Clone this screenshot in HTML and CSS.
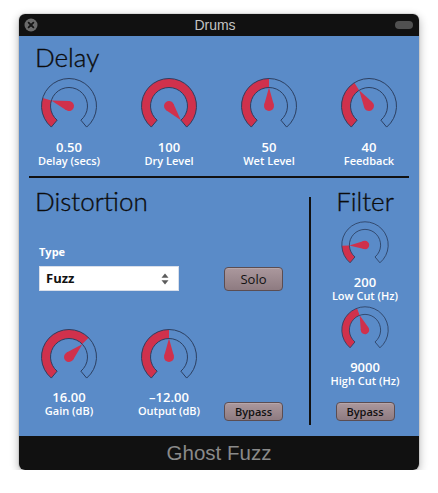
FILE: index.html
```html
<!DOCTYPE html>
<html>
<head>
<meta charset="utf-8">
<title>Drums</title>
<link rel="stylesheet" href="styles.css">
</head>
<body>
<div class="window">
  <div class="titlebar">
    <svg class="close" width="14" height="14" viewBox="0 0 14 14"><circle cx="7" cy="7" r="6.5" fill="#6a6a6a"/><path d="M4.6 4.6 L9.4 9.4 M9.4 4.6 L4.6 9.4" stroke="#151515" stroke-width="1.8" stroke-linecap="round"/></svg>
    <div class="title">Drums</div>
    <div class="pill"></div>
  </div>
  <div class="panel">
    <section class="delay">
      <h2 class="heading">Delay</h2>
      <div class="knob-row">
        <div class="knob">
          <svg width="64" height="64" viewBox="0 0 64 64"><circle class="fill" cx="32" cy="32" r="23" pathLength="360" stroke-dasharray="67 360" transform="rotate(130 32 32)"/><path class="ring" d="M14.32 53.07 A27.5 27.5 0 1 1 49.68 53.07 L43.89 46.17 A18.5 18.5 0 1 0 20.11 46.17 Z"/><g class="pointer" transform="rotate(-73 32 32)"><circle cx="32" cy="32" r="5"/><polygon points="27.19,30.65 32,13.5 36.81,30.65"/></g></svg>
          <div class="value">0.50</div>
          <div class="label">Delay (secs)</div>
        </div>
        <div class="knob">
          <svg width="64" height="64" viewBox="0 0 64 64"><circle class="fill" cx="32" cy="32" r="23" pathLength="360" stroke-dasharray="280 360" transform="rotate(130 32 32)"/><path class="ring" d="M14.32 53.07 A27.5 27.5 0 1 1 49.68 53.07 L43.89 46.17 A18.5 18.5 0 1 0 20.11 46.17 Z"/><g class="pointer" transform="rotate(140 32 32)"><circle cx="32" cy="32" r="5"/><polygon points="27.19,30.65 32,13.5 36.81,30.65"/></g></svg>
          <div class="value">100</div>
          <div class="label">Dry Level</div>
        </div>
        <div class="knob">
          <svg width="64" height="64" viewBox="0 0 64 64"><circle class="fill" cx="32" cy="32" r="23" pathLength="360" stroke-dasharray="140 360" transform="rotate(130 32 32)"/><path class="ring" d="M14.32 53.07 A27.5 27.5 0 1 1 49.68 53.07 L43.89 46.17 A18.5 18.5 0 1 0 20.11 46.17 Z"/><g class="pointer" transform="rotate(0 32 32)"><circle cx="32" cy="32" r="5"/><polygon points="27.19,30.65 32,13.5 36.81,30.65"/></g></svg>
          <div class="value">50</div>
          <div class="label">Wet Level</div>
        </div>
        <div class="knob">
          <svg width="64" height="64" viewBox="0 0 64 64"><circle class="fill" cx="32" cy="32" r="23" pathLength="360" stroke-dasharray="108 360" transform="rotate(130 32 32)"/><path class="ring" d="M14.32 53.07 A27.5 27.5 0 1 1 49.68 53.07 L43.89 46.17 A18.5 18.5 0 1 0 20.11 46.17 Z"/><g class="pointer" transform="rotate(-32 32 32)"><circle cx="32" cy="32" r="5"/><polygon points="27.19,30.65 32,13.5 36.81,30.65"/></g></svg>
          <div class="value">40</div>
          <div class="label">Feedback</div>
        </div>
      </div>
    </section>
    <div class="separator"></div>
    <div class="lower">
      <section class="distortion">
        <h2 class="heading">Distortion</h2>
        <div class="type-label">Type</div>
        <div class="select">
          <span>Fuzz</span>
          <svg width="8" height="12" viewBox="0 0 8 12"><polygon points="4,0.5 7.5,4.8 0.5,4.8" fill="#5c5c5c"/><polygon points="0.5,7.2 7.5,7.2 4,11.5" fill="#5c5c5c"/></svg>
        </div>
        <div class="btn solo">Solo</div>
        <div class="knob low">
          <svg width="64" height="64" viewBox="0 0 64 64"><circle class="fill" cx="32" cy="32" r="23" pathLength="360" stroke-dasharray="186 360" transform="rotate(130 32 32)"/><path class="ring" d="M14.32 53.07 A27.5 27.5 0 1 1 49.68 53.07 L43.89 46.17 A18.5 18.5 0 1 0 20.11 46.17 Z"/><g class="pointer" transform="rotate(46 32 32)"><circle cx="32" cy="32" r="5"/><polygon points="27.19,30.65 32,13.5 36.81,30.65"/></g></svg>
          <div class="value">16.00</div>
          <div class="label">Gain (dB)</div>
        </div>
        <div class="knob low">
          <svg width="64" height="64" viewBox="0 0 64 64"><circle class="fill" cx="32" cy="32" r="23" pathLength="360" stroke-dasharray="140 360" transform="rotate(130 32 32)"/><path class="ring" d="M14.32 53.07 A27.5 27.5 0 1 1 49.68 53.07 L43.89 46.17 A18.5 18.5 0 1 0 20.11 46.17 Z"/><g class="pointer" transform="rotate(0 32 32)"><circle cx="32" cy="32" r="5"/><polygon points="27.19,30.65 32,13.5 36.81,30.65"/></g></svg>
          <div class="value">–12.00</div>
          <div class="label">Output (dB)</div>
        </div>
        <div class="btn bypass dist-bypass">Bypass</div>
      </section>
      <div class="vline"></div>
      <section class="filter">
        <h2 class="heading">Filter</h2>
        <div class="knob small first">
          <svg width="54" height="54" viewBox="0 0 64 64"><circle class="fill" cx="32" cy="32" r="23" pathLength="360" stroke-dasharray="48 360" transform="rotate(130 32 32)"/><path class="ring" d="M14.32 53.07 A27.5 27.5 0 1 1 49.68 53.07 L43.89 46.17 A18.5 18.5 0 1 0 20.11 46.17 Z"/><g class="pointer" transform="rotate(-92 32 32)"><circle cx="32" cy="32" r="5"/><polygon points="27.19,30.65 32,13.5 36.81,30.65"/></g></svg>
          <div class="value">200</div>
          <div class="label">Low Cut (Hz)</div>
        </div>
        <div class="knob small second">
          <svg width="54" height="54" viewBox="0 0 64 64"><circle class="fill" cx="32" cy="32" r="23" pathLength="360" stroke-dasharray="120 360" transform="rotate(130 32 32)"/><path class="ring" d="M14.32 53.07 A27.5 27.5 0 1 1 49.68 53.07 L43.89 46.17 A18.5 18.5 0 1 0 20.11 46.17 Z"/><g class="pointer" transform="rotate(-20 32 32)"><circle cx="32" cy="32" r="5"/><polygon points="27.19,30.65 32,13.5 36.81,30.65"/></g></svg>
          <div class="value">9000</div>
          <div class="label">High Cut (Hz)</div>
        </div>
        <div class="btn bypass filter-bypass">Bypass</div>
      </section>
    </div>
  </div>
  <div class="footer">Ghost Fuzz</div>
</div>
</body>
</html>
```

FILE: styles.css
```css
* { box-sizing: border-box; }

body {
  margin: 0;
  padding: 14px 0 0 19px;
  background: #ffffff;
}

.window {
  width: 400px;
  border-radius: 6px;
  overflow: hidden;
  box-shadow: 0 3px 10px rgba(0, 0, 0, 0.32), 0 0 0 1px rgba(0, 0, 0, 0.08);
}

.titlebar {
  height: 22px;
  background: #111111;
  display: grid;
  grid-template-columns: 1fr auto 1fr;
  align-items: center;
  padding: 0 6px 0 5px;
}

.close { display: block; }

.title {
  font: 400 14px/22px "Liberation Sans", Arial, sans-serif;
  color: #c4c4c4;
  margin-right: 7px;
}

.pill {
  justify-self: end;
  width: 18px;
  height: 8px;
  border-radius: 4px;
  background: #505050;
}

.panel {
  background: #5a8bc8;
  height: 400px;
  display: flex;
  flex-direction: column;
}

.heading {
  margin: 0;
  font-family: Lato, "Noto Sans", sans-serif;
  font-weight: 300;
  font-size: 26px;
  line-height: 26px;
  color: #0c0c0c;
  -webkit-text-stroke: 0.35px #0c0c0c;
}

.delay .heading { margin: 8px 0 0 16px; }

.knob-row {
  display: grid;
  grid-template-columns: repeat(4, 100px);
  margin-top: 4px;
}

.knob {
  display: flex;
  flex-direction: column;
  align-items: center;
}

.knob svg { display: block; }

.fill {
  fill: none;
  stroke: #d0314c;
  stroke-width: 9;
}

.ring {
  fill: none;
  stroke: #2c3f60;
  stroke-width: 1;
}

.pointer { fill: #d0314c; }

.value {
  font: 600 13px/14px "Open Sans", sans-serif;
  color: #ffffff;
  margin-top: 2px;
}

.label {
  font: 600 11px/13px "Open Sans", sans-serif;
  color: #ffffff;
}

.separator {
  height: 2px;
  background: #111111;
  margin: 9px 10px 0;
}

.lower {
  display: flex;
  flex: 1;
}

.distortion {
  width: 290px;
  display: grid;
  grid-template-columns: 100px 100px 90px;
  align-content: start;
  align-items: start;
}

.distortion .heading {
  grid-column: 1 / -1;
  margin: 10px 0 0 16px;
}

.type-label {
  grid-column: 1 / -1;
  margin: 31px 0 0 20px;
  font: 700 11px/13px "Open Sans", sans-serif;
  color: #ffffff;
}

.select {
  grid-column: 1 / 3;
  margin: 8px 0 0 20px;
  width: 140px;
  height: 25px;
  background: #ffffff;
  border: 1px solid #d9dfea;
  display: flex;
  align-items: center;
  justify-content: space-between;
  padding: 0 9px 0 6px;
  font: 700 13px/1 "Open Sans", sans-serif;
  color: #111111;
}

.btn {
  width: 59px;
  border: 1px solid #5b4d52;
  border-radius: 4px;
  background: linear-gradient(#ab989d, #8e7b81);
  color: #111111;
  text-align: center;
  box-shadow: inset 0 1px 0 rgba(255, 255, 255, 0.15);
}

.solo {
  margin: 9px 0 0 5px;
  height: 24px;
  font: 400 13px/22px "Open Sans", sans-serif;
}

.bypass {
  height: 19px;
  font: 600 11px/17px "Open Sans", sans-serif;
}

.knob.low { margin-top: 34px; }
.knob.low .value { margin-top: 1px; }

.dist-bypass { margin: 111px 0 0 5px; }

.vline {
  width: 2px;
  height: 228px;
  margin-top: 19px;
  background: #111111;
}

.filter {
  flex: 1;
  display: flex;
  flex-direction: column;
  align-items: center;
}

.filter .heading { margin-top: 10px; }

.knob.small .value { margin-top: 3px; }
.knob.first { margin-top: 4px; }
.knob.second { margin-top: 1px; }

.filter-bypass { margin-top: 15px; }

.footer {
  height: 34px;
  background: #111111;
  text-align: center;
  font: 400 20.5px/34px "Liberation Sans", Arial, sans-serif;
  color: #8a8a8a;
}
```
